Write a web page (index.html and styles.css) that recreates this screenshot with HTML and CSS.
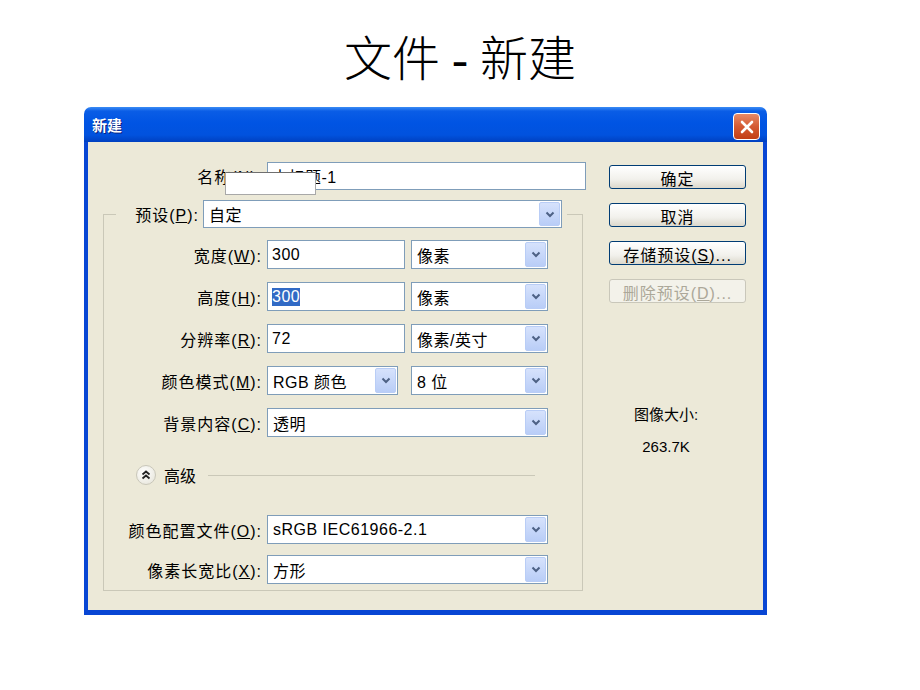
FILE: index.html
```html
<!DOCTYPE html>
<html lang="zh-CN">
<head>
    <meta charset="UTF-8">
    <title>文件 - 新建</title>
    <link rel="stylesheet" href="styles.css">
</head>
<body>

<div class="page">
    <h1 class="title">文件 - 新建</h1>

    <div class="window">
        <div class="titlebar">
            <h2>新建</h2>
            <div class="close">
                <svg width="16" height="16" viewBox="0 0 16 16"><path d="M3 3 L13 13 M13 3 L3 13" stroke="#fff" stroke-width="2.6" stroke-linecap="round"/></svg>
            </div>
        </div>

        <div class="dialog">
            <div class="left">
                <div class="row name">
                    <label class="lbl">名称(<u>N</u>):</label>
                    <div class="field w-name">未标题-1</div>
                </div>

                <fieldset class="group">
                    <legend>
                        <div class="preset">
                            <label class="lbl preset-lbl">预设(<u>P</u>):</label>
                            <div class="select w-preset"><span class="val">自定</span><span class="drop"><svg width="10" height="7" viewBox="0 0 10 7"><path d="M1.5 1.5 L5 5 L8.5 1.5" fill="none" stroke="#4d6185" stroke-width="2"/></svg></span></div>
                        </div>
                    </legend>

                    <div class="frow first">
                        <label class="lbl">宽度(<u>W</u>):</label>
                        <div class="field w-num">300</div>
                        <div class="select w-unit gap6"><span class="val">像素</span><span class="drop"><svg width="10" height="7" viewBox="0 0 10 7"><path d="M1.5 1.5 L5 5 L8.5 1.5" fill="none" stroke="#4d6185" stroke-width="2"/></svg></span></div>
                    </div>
                    <div class="frow">
                        <label class="lbl">高度(<u>H</u>):</label>
                        <div class="field w-num"><span class="sel">300</span></div>
                        <div class="select w-unit gap6"><span class="val">像素</span><span class="drop"><svg width="10" height="7" viewBox="0 0 10 7"><path d="M1.5 1.5 L5 5 L8.5 1.5" fill="none" stroke="#4d6185" stroke-width="2"/></svg></span></div>
                    </div>
                    <div class="frow">
                        <label class="lbl">分辨率(<u>R</u>):</label>
                        <div class="field w-num">72</div>
                        <div class="select w-unit gap6"><span class="val">像素/英寸</span><span class="drop"><svg width="10" height="7" viewBox="0 0 10 7"><path d="M1.5 1.5 L5 5 L8.5 1.5" fill="none" stroke="#4d6185" stroke-width="2"/></svg></span></div>
                    </div>
                    <div class="frow">
                        <label class="lbl">颜色模式(<u>M</u>):</label>
                        <div class="select w-mode"><span class="val">RGB 颜色</span><span class="drop"><svg width="10" height="7" viewBox="0 0 10 7"><path d="M1.5 1.5 L5 5 L8.5 1.5" fill="none" stroke="#4d6185" stroke-width="2"/></svg></span></div>
                        <div class="select w-unit gap13"><span class="val">8 位</span><span class="drop"><svg width="10" height="7" viewBox="0 0 10 7"><path d="M1.5 1.5 L5 5 L8.5 1.5" fill="none" stroke="#4d6185" stroke-width="2"/></svg></span></div>
                    </div>
                    <div class="frow">
                        <label class="lbl">背景内容(<u>C</u>):</label>
                        <div class="select w-wide"><span class="val">透明</span><span class="drop"><svg width="10" height="7" viewBox="0 0 10 7"><path d="M1.5 1.5 L5 5 L8.5 1.5" fill="none" stroke="#4d6185" stroke-width="2"/></svg></span></div>
                    </div>

                    <div class="advanced">
                        <span class="toggle">
                            <svg width="12" height="12" viewBox="0 0 12 12"><path d="M2.5 5.5 L6 2.5 L9.5 5.5 M2.5 9.5 L6 6.5 L9.5 9.5" fill="none" stroke="#222" stroke-width="1.8"/></svg>
                        </span>
                        <span class="adv-text">高级</span>
                        <span class="adv-line"></span>
                    </div>

                    <div class="frow profile">
                        <label class="lbl">颜色配置文件(<u>O</u>):</label>
                        <div class="select w-wide"><span class="val">sRGB IEC61966-2.1</span><span class="drop"><svg width="10" height="7" viewBox="0 0 10 7"><path d="M1.5 1.5 L5 5 L8.5 1.5" fill="none" stroke="#4d6185" stroke-width="2"/></svg></span></div>
                    </div>
                    <div class="frow aspect">
                        <label class="lbl">像素长宽比(<u>X</u>):</label>
                        <div class="select w-wide"><span class="val">方形</span><span class="drop"><svg width="10" height="7" viewBox="0 0 10 7"><path d="M1.5 1.5 L5 5 L8.5 1.5" fill="none" stroke="#4d6185" stroke-width="2"/></svg></span></div>
                    </div>
                </fieldset>
            </div>

            <div class="right">
                <button class="btn">确定</button>
                <button class="btn">取消</button>
                <button class="btn">存储预设(<u>S</u>)...</button>
                <button class="btn disabled">删除预设(<u>D</u>)...</button>

                <div class="info">
                    <div class="info-title">图像大小:</div>
                    <div class="info-size">263.7K</div>
                </div>
            </div>
        </div>

        <div class="mask"></div>
    </div>
</div>

</body>
</html>
```

FILE: styles.css
```css
* {
    box-sizing: border-box;
}
body {
    margin: 0;
    background: #fff;
    font-family: "Liberation Sans", "Noto Sans CJK SC", sans-serif;
}
.page {
    padding-top: 32px;
}
.title {
    margin: 0 0 19px;
    height: 56px;
    line-height: 56px;
    text-align: center;
    font-size: 48px;
    font-weight: 300;
    font-family: "Liberation Serif", "Noto Sans CJK SC", serif;
    color: #000;
}

/* window frame */
.window {
    position: relative;
    width: 683px;
    margin-left: 84px;
}
.titlebar {
    height: 35px;
    border-radius: 7px 7px 0 0;
    background: linear-gradient(#3b8cf5 0%, #0a5de6 12%, #0054e3 45%, #0152de 80%, #0040c0 100%);
    display: flex;
    align-items: center;
    justify-content: space-between;
    padding: 0 7px 0 8px;
}
.titlebar h2 {
    margin: 0;
    font-size: 15px;
    font-weight: bold;
    color: #fff;
    text-shadow: 1px 1px #0a1f7d;
    font-family: "Noto Sans CJK SC", sans-serif;
}
.close {
    width: 27px;
    height: 27px;
    margin-top: 4px;
    border: 1px solid #fff;
    border-radius: 4px;
    background: linear-gradient(#e88a67, #d45a33 50%, #c23e16);
    display: flex;
    align-items: center;
    justify-content: center;
}
.dialog {
    display: flex;
    background: #ece9d8;
    border: solid #0846d4;
    border-width: 0 4px 5px;
    padding: 20px 0 19px;
    font-size: 16px;
    color: #000;
}
.left {
    width: 498px;
}
.lbl {
    flex: none;
    text-align: right;
    padding-right: 5px;
    letter-spacing: 1px;
    white-space: nowrap;
}

/* fields */
.field,
.select {
    height: 29px;
    background: #fff;
    border: 1px solid #7f9db9;
    display: flex;
    align-items: center;
    padding-left: 4px;
    letter-spacing: 0.5px;
}
.select {
    justify-content: space-between;
    padding: 1px 1px 1px 5px;
}
.drop {
    width: 21px;
    height: 100%;
    border: 1px solid #b9cdf6;
    border-radius: 2px;
    background: linear-gradient(#d6e2fc, #b9cdf7);
    display: flex;
    align-items: center;
    justify-content: center;
}
.sel {
    background: #316ac5;
    color: #fff;
}
.row {
    display: flex;
    align-items: center;
}
.name .lbl {
    width: 179px;
}
.w-name {
    width: 319px;
    height: 28px;
}

/* group frame */
.group {
    margin: 10px 0 0 15px;
    width: 480px;
    border: 1px solid #cac8b8;
    padding: 0 0 6px;
    min-width: 0;
}
.group legend {
    margin-left: 12px;
    padding: 0 5px;
}
.preset {
    display: flex;
    align-items: center;
    height: 28px;
}
.preset-lbl {
    width: 82px;
    padding-right: 4px;
}
.w-preset {
    width: 359px;
    height: 28px;
}
.frow {
    display: flex;
    align-items: center;
    height: 29px;
    margin-top: 13px;
}
.frow.first {
    margin-top: 12px;
}
.frow .lbl {
    width: 163px;
}
.w-num {
    width: 138px;
}
.w-unit {
    width: 137px;
}
.w-mode {
    width: 131px;
}
.w-wide {
    width: 281px;
}
.gap6 {
    margin-left: 6px;
}
.gap13 {
    margin-left: 13px;
}

/* advanced toggle */
.advanced {
    display: flex;
    align-items: center;
    height: 22px;
    margin: 27px 47px 0 32px;
}
.toggle {
    width: 20px;
    height: 20px;
    border-radius: 50%;
    border: 1px solid #c9c7ba;
    background: radial-gradient(circle at 40% 35%, #fff, #e4e2d6);
    display: flex;
    align-items: center;
    justify-content: center;
}
.adv-text {
    margin-left: 8px;
}
.adv-line {
    flex: 1;
    height: 1px;
    margin-left: 12px;
    background: #cac8b8;
}
.frow.profile {
    margin-top: 29px;
}
.frow.aspect {
    margin-top: 11px;
}

/* right column */
.right {
    margin-left: 23px;
    width: 137px;
    padding-top: 3px;
}
.btn {
    display: block;
    width: 137px;
    height: 24px;
    margin-bottom: 14px;
    border: 1px solid #003c74;
    border-radius: 3px;
    background: linear-gradient(#fff, #f2f1ec 60%, #dcd8cc);
    font-family: "Liberation Sans", "Noto Sans CJK SC", sans-serif;
    font-size: 16px;
    letter-spacing: 1px;
    padding: 0;
    color: #000;
}
.btn.disabled {
    margin-top: 4px;
    border-color: #c9c7ba;
    background: #f3f2ea;
    color: #aca899;
}
.info {
    padding-right: 23px;
    margin-top: 102px;
    text-align: center;
    font-size: 15px;
    line-height: 20px;
}
.info-size {
    margin-top: 12px;
}

/* white patch over the name row */
.mask {
    position: absolute;
    left: 141px;
    top: 65px;
    width: 91px;
    height: 23px;
    background: #fff;
    border: 1px solid #a8a8a8;
    border-top-color: #6f6f6f;
}
```
